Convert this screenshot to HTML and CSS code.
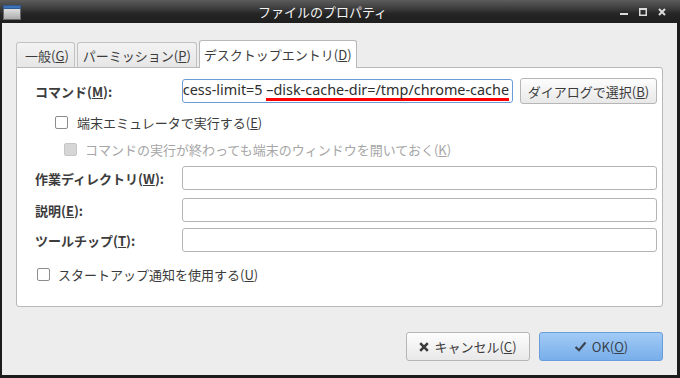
FILE: index.html
```html
<!DOCTYPE html>
<html lang="ja">
<head>
    <meta charset="UTF-8">
    <meta name="viewport" content="width=device-width, initial-scale=1.0">
    <title>ファイルのプロパティ</title>
    <link rel="stylesheet" href="styles.css">
</head>
<body>
    <div class="window">
        <div class="titlebar">
            <svg class="app-icon" width="18" height="15" viewBox="0 0 18 15">
                <defs>
                    <linearGradient id="body" x1="0" y1="0" x2="0" y2="1">
                        <stop offset="0" stop-color="#f2f2f2"/>
                        <stop offset="1" stop-color="#a9a9a9"/>
                    </linearGradient>
                </defs>
                <rect x="0.5" y="0.5" width="17" height="14" fill="url(#body)" stroke="#6a6a6a"/>
                <rect x="0.5" y="0.5" width="17" height="3" fill="#3f73b8" stroke="#2f5a94"/>
            </svg>
            <div class="title">ファイルのプロパティ</div>
            <div class="controls">
                <svg width="8" height="8" viewBox="0 0 8 8"><rect x="0" y="5" width="8" height="2" fill="#dcdcdc"/></svg>
                <svg width="8" height="8" viewBox="0 0 8 8"><rect x="0.75" y="0.75" width="6.5" height="6.5" fill="none" stroke="#dcdcdc" stroke-width="1.5"/><rect x="0" y="0" width="8" height="2" fill="#dcdcdc"/></svg>
                <svg width="8" height="8" viewBox="0 0 8 8"><path d="M1 1 L7 7 M7 1 L1 7" stroke="#dcdcdc" stroke-width="2"/></svg>
            </div>
        </div>

        <div class="client">
            <div class="notebook">
                <div class="tabs">
                    <div class="tab tab-first">一般(<u>G</u>)</div>
                    <div class="tab">パーミッション(<u>P</u>)</div>
                    <div class="tab tab-active">デスクトップエントリ(<u>D</u>)</div>
                </div>
                <div class="page">
                    <div class="row row-cmd">
                        <div class="label">コマンド(<u>M</u>):</div>
                        <div class="entry entry-focus">
                            <span class="entry-text">cess-limit=5 <span class="mark">–disk-cache-dir=/tmp/chrome-cache</span></span>
                        </div>
                        <button class="btn btn-pick"><span>ダイアログで選択(<u>B</u>)</span></button>
                    </div>

                    <div class="check check-term">
                        <span class="box"></span>
                        <span>端末エミュレータで実行する(<u>E</u>)</span>
                    </div>
                    <div class="check check-keep disabled">
                        <span class="box"></span>
                        <span>コマンドの実行が終わっても端末のウィンドウを開いておく(<u>K</u>)</span>
                    </div>

                    <div class="row row-dir">
                        <div class="label">作業ディレクトリ(<u>W</u>):</div>
                        <div class="entry"></div>
                    </div>
                    <div class="row row-desc">
                        <div class="label">説明(<u>E</u>):</div>
                        <div class="entry"></div>
                    </div>
                    <div class="row row-tip">
                        <div class="label">ツールチップ(<u>T</u>):</div>
                        <div class="entry"></div>
                    </div>

                    <div class="check check-startup">
                        <span class="box"></span>
                        <span>スタートアップ通知を使用する(<u>U</u>)</span>
                    </div>
                </div>
            </div>

            <div class="actions">
                <button class="btn btn-action">
                    <svg width="10" height="10" viewBox="0 0 10 10"><path d="M1.2 1.2 L8.8 8.8 M8.8 1.2 L1.2 8.8" stroke="#3a3a3a" stroke-width="2.6"/></svg>
                    <span>キャンセル(<u>C</u>)</span>
                </button>
                <button class="btn btn-action btn-ok">
                    <svg width="13" height="11" viewBox="0 0 13 11"><path d="M1.5 6 L5 9.2 L11.5 1.5" fill="none" stroke="#3a4550" stroke-width="2.2"/></svg>
                    <span>OK(<u>O</u>)</span>
                </button>
            </div>
        </div>
    </div>
</body>
</html>
```

FILE: styles.css
```css
body {
    margin: 0;
    font-family: "Noto Sans CJK JP", "Noto Sans", sans-serif;
    font-size: 13px;
    color: #3c3c3c;
    overflow: hidden;
}
.window {
    width: 680px;
    height: 378px;
    background-color: #1c1c1c;
    display: flex;
    flex-direction: column;
}
.titlebar {
    height: 23px;
    flex-shrink: 0;
    display: flex;
    align-items: center;
    background: linear-gradient(#5c5c5c, #3a3a3a 40%, #252525 60%, #1e1e1e);
}
.app-icon {
    margin-left: 3px;
    margin-top: 1px;
}
.title {
    flex: 1;
    text-align: center;
    color: #f4f4f4;
    font-size: 13px;
    margin-left: 4px;
}
.controls {
    display: flex;
    align-items: center;
    gap: 11px;
    padding: 0 9px 0 0;
    width: 51px;
}
.client {
    flex: 1;
    background-color: #ededed;
    margin: 0 3px 3px 2px;
    padding: 16px 14px 14px 14px;
    display: flex;
    flex-direction: column;
}
.notebook {
    flex: 1;
    display: flex;
    flex-direction: column;
}
.tabs {
    display: flex;
    align-items: flex-end;
    gap: 2px;
    height: 28px;
    flex-shrink: 0;
}
.tab {
    height: 25px;
    box-sizing: border-box;
    border: 1px solid #c2c2c2;
    border-bottom: none;
    border-radius: 3px 3px 0 0;
    background: linear-gradient(#f3f3f3, #e6e6e6);
    padding: 0 5px;
    display: flex;
    align-items: center;
}
.tab-first {
    padding: 0 5px 0 8px;
}
.tab-active {
    height: 28px;
    background: #ffffff;
    border-color: #b8b8b8;
    margin-bottom: -1px;
    position: relative;
    z-index: 1;
    padding: 0 4px;
}
.page {
    flex: 1;
    background: #ffffff;
    border: 1px solid #b8b8b8;
    border-radius: 0 3px 3px 3px;
    padding: 10px 5px 0 18px;
    display: flex;
    flex-direction: column;
}
.row {
    display: flex;
    align-items: center;
}
.label {
    width: 147px;
    flex-shrink: 0;
    font-weight: bold;
}
.entry {
    flex: 1;
    height: 24px;
    box-sizing: border-box;
    border: 1px solid #b4b4b4;
    border-radius: 3px;
    background: #ffffff;
}
.entry-focus {
    border-color: #6b9bd6;
    display: flex;
    justify-content: flex-end;
    align-items: center;
    overflow: hidden;
    white-space: nowrap;
    padding-right: 3px;
}
.entry-text {
    font-family: "Noto Sans", sans-serif;
    font-size: 14.4px;
    line-height: 18px;
    color: #2e2e2e;
}
.mark {
    display: inline-block;
    line-height: 17px;
    border-bottom: 3px solid #ff0000;
}
.btn {
    font-family: inherit;
    font-size: 13px;
    color: #3c3c3c;
    border: 1px solid #b6b6b6;
    border-radius: 3px;
    background: linear-gradient(#fdfdfd, #e8e8e8);
    display: flex;
    align-items: center;
    justify-content: center;
    gap: 5px;
    padding: 0;
    box-sizing: border-box;
}
.btn-pick {
    width: 137px;
    height: 26px;
    margin-left: 7px;
}
.check {
    display: flex;
    align-items: center;
    gap: 9px;
    height: 20px;
}
.box {
    width: 13px;
    height: 13px;
    box-sizing: border-box;
    border: 1px solid #8c8c8c;
    border-radius: 2px;
    background: #ffffff;
}
.check-term {
    margin-top: 8px;
    padding-left: 20px;
}
.check-keep {
    margin-top: 7px;
    padding-left: 29px;
    gap: 8px;
}
.disabled {
    color: #a6a6a6;
}
.disabled .box {
    background: #d6d6d6;
    border-color: #c6c6c6;
}
.row-dir {
    margin-top: 7px;
}
.row-desc {
    margin-top: 8px;
}
.row-tip {
    margin-top: 6px;
}
.check-startup {
    margin-top: 12px;
    padding-left: 2px;
    gap: 8px;
}
.actions {
    display: flex;
    justify-content: flex-end;
    gap: 9px;
    margin-top: 25px;
    flex-shrink: 0;
}
.btn-action {
    width: 124px;
    height: 29px;
}
.btn-ok {
    background: linear-gradient(#a2cbf6, #78aeea);
    border-color: #6a9edb;
    color: #36414c;
}
```
